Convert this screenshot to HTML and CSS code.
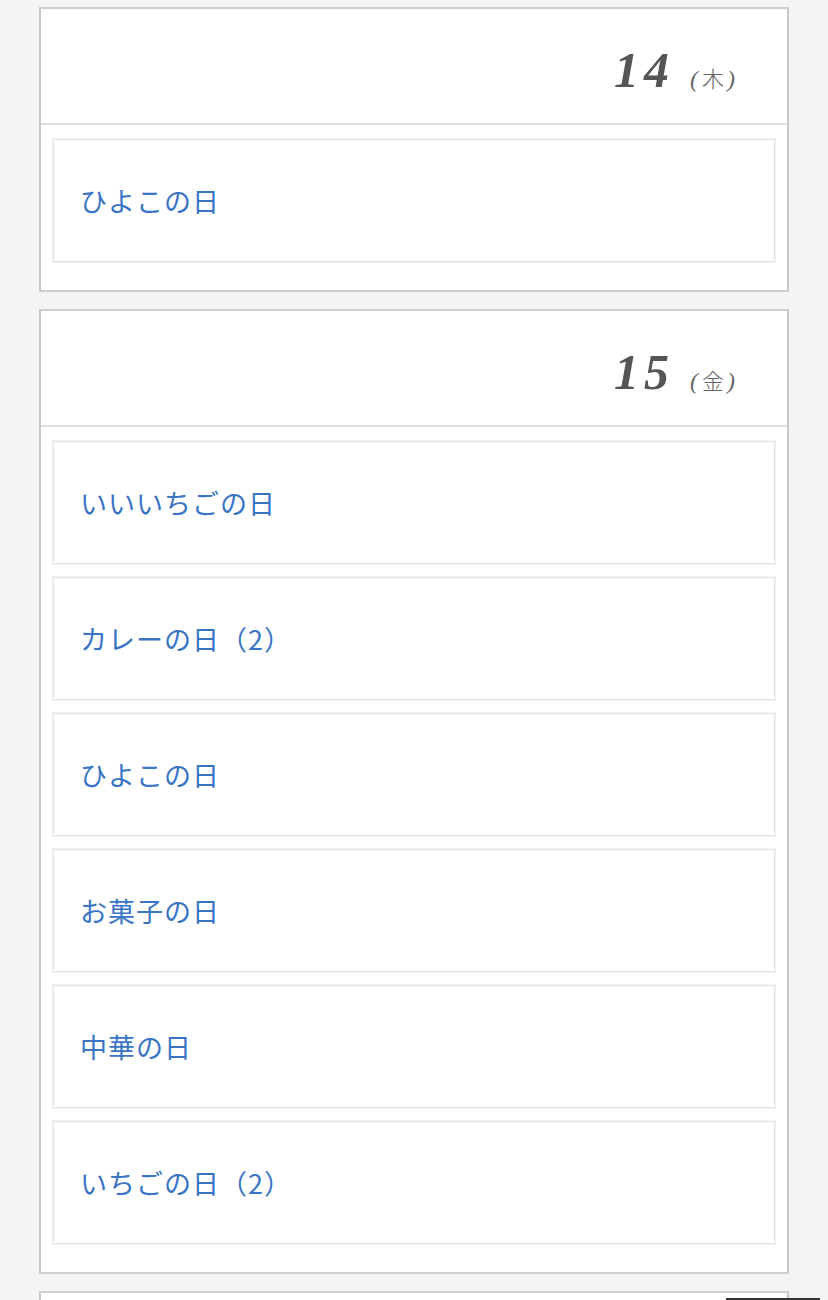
FILE: index.html
```html
<!DOCTYPE html>
<html lang="ja">
<head>
<meta charset="utf-8">
<title>記念日カレンダー</title>
<link rel="stylesheet" href="styles.css">
</head>
<body>
<main class="days">
  <section class="day">
    <header class="day-head">
      <span class="day-num">14</span>
      <span class="day-week"><span class="paren">(</span><span class="wk">木</span><span class="paren">)</span></span>
    </header>
    <ul class="events">
      <li class="event"><a href="#">ひよこの日</a></li>
    </ul>
  </section>

  <section class="day">
    <header class="day-head">
      <span class="day-num">15</span>
      <span class="day-week"><span class="paren">(</span><span class="wk">金</span><span class="paren">)</span></span>
    </header>
    <ul class="events">
      <li class="event"><a href="#">いいいちごの日</a></li>
      <li class="event"><a href="#">カレーの日（2）</a></li>
      <li class="event"><a href="#">ひよこの日</a></li>
      <li class="event"><a href="#">お菓子の日</a></li>
      <li class="event"><a href="#">中華の日</a></li>
      <li class="event"><a href="#">いちごの日（2）</a></li>
    </ul>
  </section>

  <!-- next day, its header is below the fold -->
  <section class="day day-next">
    <div class="day-head"></div>
  </section>
</main>
<a class="to-top" href="#" aria-label="ページの先頭へ">
  <svg width="20" height="12" viewBox="0 0 20 12" aria-hidden="true">
    <path d="M2 10 L10 2 L18 10" fill="none" stroke="#fff" stroke-width="2"/>
  </svg>
</a>
</body>
</html>
```
FILE: styles.css
```css
html, body {
  margin: 0;
  padding: 0;
  background: #f4f4f4;
}

body {
  font-family: "Noto Sans CJK JP", "Noto Sans", sans-serif;
}

.days {
  padding: 7px 39px 0;
}

.day {
  background: #fff;
  border: 2px solid #cfcfcf;
  border-left-color: #c8c8c8;
  border-right-color: #c8c8c8;
  margin-bottom: 17px;
}

.day-head {
  height: 116px;
  display: flex;
  justify-content: flex-end;
  align-items: baseline;
  padding: 36px 52px 0 0;
  border-bottom: 2px solid #dedede;
  color: #555;
  box-sizing: border-box;
}

.day-num {
  font-family: "Liberation Serif", serif;
  font-style: italic;
  font-weight: bold;
  font-size: 50px;
  line-height: 1;
  letter-spacing: 5px;
}

.day-week {
  margin-left: 16px;
  color: #666;
  font-size: 22px;
  line-height: 1;
}

.day-week .paren {
  font-family: "Liberation Serif", serif;
  font-style: italic;
  font-size: 24px;
}

.day-week .wk {
  font-family: "Noto Sans CJK JP", sans-serif;
  font-weight: 300;
  font-size: 22px;
  margin: 0 3px 0 4px;
}

.events {
  list-style: none;
  margin: 0;
  padding: 14px 12px 15px;
}

.event {
  border: 1px solid #e4e4e4;
  box-shadow: 0 0 0 1px #f2f2f2;
  height: 123px;
  box-sizing: border-box;
  display: flex;
  align-items: center;
  padding: 0 26px;
  margin-bottom: 13px;
}

.event a {
  color: #3a74c4;
  text-decoration: none;
  font-size: 27px;
  letter-spacing: 1px;
}

.to-top {
  position: fixed;
  right: 8px;
  bottom: -40px;
  width: 94px;
  height: 42px;
  background: #333;
  display: flex;
  justify-content: center;
  align-items: flex-start;
  padding-top: 10px;
  box-sizing: border-box;
}
```
